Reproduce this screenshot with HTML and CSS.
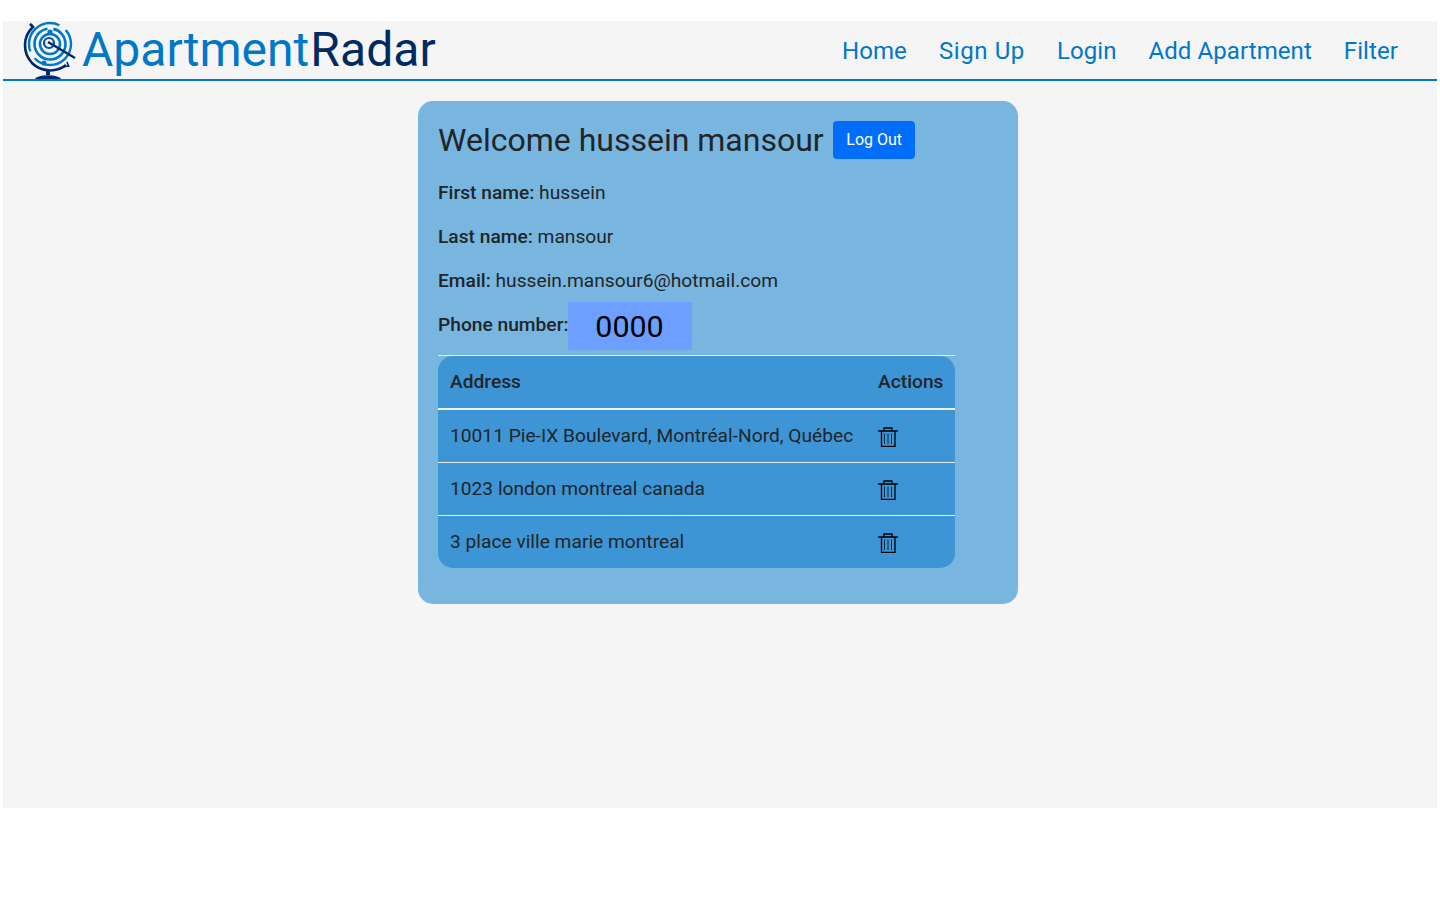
FILE: index.html
```html
<!DOCTYPE html>
<html lang="en">
<head>
<meta charset="utf-8">
<title>ApartmentRadar</title>
<link rel="stylesheet" href="styles.css">
</head>
<body>
<div class="app">
  <nav class="nav">
    <a class="brand" href="#">
      <svg class="logo" viewBox="0 0 56 60" width="56" height="60" fill="none">
        <path d="M7 3 L10 6 C0 15 -1 31 9 42 C18 51 33 52 43 44" stroke="#002a6b" stroke-width="2.6"/>
        <path d="M10 5 l-3 -2 M44 41 l2 5 M40 46 l5 -1" stroke="#002a6b" stroke-width="1.6"/>
        <circle cx="27" cy="23" r="21" stroke="#0077c8" stroke-width="2.4" stroke-dasharray="50 8"/>
        <circle cx="27" cy="23" r="15.5" stroke="#0077c8" stroke-width="2.6" stroke-dasharray="70 6"/>
        <circle cx="27" cy="23" r="10" stroke="#0077c8" stroke-width="2.6"/>
        <circle cx="26" cy="22" r="5" stroke="#0a4f9c" stroke-width="2.2"/>
        <circle cx="27" cy="11" r="2.6" fill="#0077c8"/>
        <circle cx="21" cy="42" r="2.6" fill="#0077c8"/>
        <path d="M25 21 L52 37" stroke="#002a6b" stroke-width="2.4"/>
        <path d="M25 49 V54" stroke="#002a6b" stroke-width="4"/>
        <path d="M12 58 C15 53 35 53 38 58 Z" fill="#002a6b"/>
      </svg>
      <span class="brand-a">Apartment</span><span class="brand-b">Radar</span>
    </a>
    <ul class="links">
      <li><a href="#">Home</a></li>
      <li><a class="wide" href="#">Sign Up</a></li>
      <li><a href="#">Login</a></li>
      <li><a href="#">Add Apartment</a></li>
      <li><a href="#">Filter</a></li>
    </ul>
  </nav>
  <main class="card">
    <div class="welcome">
      <h3>Welcome hussein mansour</h3>
      <button class="logout" type="button">Log Out</button>
    </div>
    <p><b>First name:</b> hussein</p>
    <p><b>Last name:</b> mansour</p>
    <p><b>Email:</b> hussein.mansour6@hotmail.com</p>
    <div class="phone"><b class="phone-label">Phone number:</b><span class="phone-val">0000</span></div>
    <div class="table-wrap">
    <table>
      <thead>
        <tr><th>Address</th><th>Actions</th></tr>
      </thead>
      <tbody>
        <tr><td>10011 Pie-IX Boulevard, Montréal-Nord, Québec</td><td><svg class="trash" viewBox="0 0 20 20" width="20" height="20" fill="none"><path class="trash-o" d="M0 4H20M3.5 4V19.5H17V4M6 4V1H14V4"/><path class="trash-i" d="M6.5 6.5V17M10 6.5V17M13.5 6.5V17"/></svg></td></tr>
        <tr><td>1023 london montreal canada</td><td><svg class="trash" viewBox="0 0 20 20" width="20" height="20" fill="none"><path class="trash-o" d="M0 4H20M3.5 4V19.5H17V4M6 4V1H14V4"/><path class="trash-i" d="M6.5 6.5V17M10 6.5V17M13.5 6.5V17"/></svg></td></tr>
        <tr><td>3 place ville marie montreal</td><td><svg class="trash" viewBox="0 0 20 20" width="20" height="20" fill="none"><path class="trash-o" d="M0 4H20M3.5 4V19.5H17V4M6 4V1H14V4"/><path class="trash-i" d="M6.5 6.5V17M10 6.5V17M13.5 6.5V17"/></svg></td></tr>
      </tbody>
    </table>
    </div>
  </main>
</div>
</body>
</html>
```
FILE: styles.css
```css
* { box-sizing: border-box; }
html, body { margin: 0; padding: 0; background: #fff; }
body { font-family: Roboto, "Liberation Sans", sans-serif; color: #212529; padding: 21px 3px 0; }
.app { background: #f5f5f5; height: 787px; display: flex; flex-direction: column; align-items: center; }
.nav { width: 100%; height: 60px; border-bottom: 2px solid #0077c8; display: flex; align-items: center; justify-content: space-between; padding: 2px 39px 0 20px; flex: none; }
.brand { display: flex; align-items: center; text-decoration: none; font-size: 48px; line-height: 58px; letter-spacing: 0.1px; }
.logo { flex: none; margin-right: 3px; }
.brand-a { color: #0077c8; margin-top: -2px; letter-spacing: 0; }
.brand-b { color: #002a62; margin-top: -2px; margin-left: 1px; }
.links { display: flex; gap: 32px; list-style: none; margin: 0; padding: 0; }
.links a { color: #0077c8; text-decoration: none; font-size: 24px; line-height: 30px; letter-spacing: 0.08px; }
.links a.wide { letter-spacing: 0.6px; }
.card { width: 600px; margin: 20px 4px 0 0; background: #79b6df; border-radius: 15px; padding: 20px 20px 36px; }
.welcome { display: flex; align-items: center; gap: 9px; height: 38px; margin-bottom: 22px; }
h3 { margin: 0; font-size: 32px; font-weight: 400; line-height: 38px; }
.logout { background-color: #006dfb; color: #fff; border: 0; border-radius: 4px; font: 400 16px/24px Roboto, sans-serif; white-space: nowrap; padding: 0 0 0 1px; height: 38px; width: 82px; }
p { margin: 0 0 20px; font-size: 19.2px; line-height: 24px; }
b { font-weight: 500; }
.phone { display: flex; align-items: center; font-size: 19.2px; height: 48px; margin-top: -11px; }
.phone-label { margin-bottom: 4px; }
.phone-val { background: #6c9fff; color: #000; width: 124px; height: 48px; margin-left: -1px; font-size: 30.4px; line-height: 50px; text-align: center; }
.table-wrap { width: 517px; margin-top: 5px; border-top: 1px solid #e8eef2; }
table { border-collapse: separate; border-spacing: 0; width: 100%; table-layout: fixed; background: #3d95d5; border-radius: 15px; font-size: 19.2px; }
th, td { padding: 0 12px 2px; text-align: left; height: 53px; white-space: nowrap; }
th { font-weight: 500; height: 54px; border-bottom: 2px solid #eef2f5; }
tbody tr:first-child td { height: 52px; }
tbody tr + tr td { border-top: 1px solid #e8eef2; }
.trash { display: block; margin-top: 4px; }
.trash-o { stroke: #000; stroke-width: 1.3; }
.trash-i { stroke: #0c2a40; stroke-width: 1; }
td:last-child, th:last-child { width: 89px; }
```
